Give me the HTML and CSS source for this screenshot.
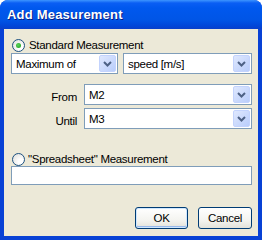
FILE: index.html
```html
<!DOCTYPE html>
<html lang="en">
<head>
    <meta charset="UTF-8">
    <title>Add Measurement</title>
    <link rel="stylesheet" href="styles.css">
</head>
<body>
    <div class="window">
        <div class="titlebar">Add Measurement</div>
        <div class="client">
            <label class="radio-row first">
                <span class="radio checked"></span>
                <span>Standard Measurement</span>
            </label>
            <div class="combo-row">
                <div class="combo small">
                    <span class="value">Maximum of</span>
                    <span class="drop"><svg width="9" height="6" viewBox="0 0 9 6"><polyline points="1,1 4.5,4.5 8,1" fill="none" stroke="#4d6185" stroke-width="2"/></svg></span>
                </div>
                <div class="combo wide">
                    <span class="value">speed [m/s]</span>
                    <span class="drop"><svg width="9" height="6" viewBox="0 0 9 6"><polyline points="1,1 4.5,4.5 8,1" fill="none" stroke="#4d6185" stroke-width="2"/></svg></span>
                </div>
            </div>
            <div class="field-row from">
                <span class="field-label">From</span>
                <div class="combo wide">
                    <span class="value">M2</span>
                    <span class="drop"><svg width="9" height="6" viewBox="0 0 9 6"><polyline points="1,1 4.5,4.5 8,1" fill="none" stroke="#4d6185" stroke-width="2"/></svg></span>
                </div>
            </div>
            <div class="field-row until">
                <span class="field-label">Until</span>
                <div class="combo wide">
                    <span class="value">M3</span>
                    <span class="drop"><svg width="9" height="6" viewBox="0 0 9 6"><polyline points="1,1 4.5,4.5 8,1" fill="none" stroke="#4d6185" stroke-width="2"/></svg></span>
                </div>
            </div>
            <label class="radio-row second">
                <span class="radio"></span>
                <span>"Spreadsheet" Measurement</span>
            </label>
            <div class="textbox"></div>
            <div class="buttons">
                <button class="btn default">OK</button>
                <button class="btn">Cancel</button>
            </div>
        </div>
    </div>
</body>
</html>
```
FILE: styles.css
```css
body {
    margin: 0;
    background: #ffffff;
    font-family: "Liberation Sans", Arial, sans-serif;
    font-size: 11.5px;
    letter-spacing: -0.3px;
    color: #000000;
}

.window {
    width: 262px;
    height: 240px;
    display: flex;
    flex-direction: column;
    background: #0841d5;
    border-radius: 8px 8px 0 0;
    overflow: hidden;
}

.titlebar {
    height: 29px;
    box-sizing: border-box;
    padding: 7px 0 0 7px;
    color: #ffffff;
    font-weight: bold;
    font-size: 13px;
    letter-spacing: 0.2px;
    text-shadow: 1px 1px 0 #0a1e80;
    background: linear-gradient(#3d95ff 0px, #0a5ef4 3px, #0058ee 8px, #0055e6 20px, #0146d8 26px, #0a3fc9 29px);
}

.client {
    flex: 1;
    margin: 0 4px 4px 4px;
    background: #ece9d8;
    padding: 0 6px 0 7px;
    display: flex;
    flex-direction: column;
}

.radio-row {
    display: flex;
    align-items: center;
    gap: 4px;
    height: 14px;
    padding-left: 1px;
}

.radio-row.first {
    margin-top: 9px;
}

.radio-row.second {
    margin-top: 23px;
    gap: 3px;
}

.radio {
    width: 11px;
    height: 11px;
    border: 1px solid #1c5180;
    border-radius: 50%;
    background: radial-gradient(circle at 70% 70%, #ffffff 20%, #dcdcd7 100%);
    display: flex;
    align-items: center;
    justify-content: center;
}

.radio.checked::after {
    content: "";
    width: 5px;
    height: 5px;
    border-radius: 50%;
    background: radial-gradient(circle at 40% 40%, #5bd45b, #1a9c1a);
}

.combo-row {
    display: flex;
    justify-content: space-between;
    margin-top: 1px;
}

.combo {
    height: 21px;
    box-sizing: border-box;
    border: 1px solid #7f9db9;
    background: #ffffff;
    display: flex;
    align-items: center;
    justify-content: space-between;
    padding: 1px;
}

.combo.small {
    width: 107px;
}

.combo.wide {
    flex: 1;
}

.combo-row .combo.wide {
    flex: 0 0 129px;
}

.value {
    padding-left: 3px;
}

.drop {
    width: 17px;
    height: 17px;
    box-sizing: border-box;
    border: 1px solid #c3d3fd;
    border-radius: 2px;
    background: linear-gradient(135deg, #dfe8fe, #b9cdfb);
    display: flex;
    align-items: center;
    justify-content: center;
}

.field-row {
    display: flex;
    align-items: center;
}

.field-row.from {
    margin-top: 10px;
}

.field-row.until {
    margin-top: 3px;
}

.field-label {
    width: 66px;
    text-align: right;
    padding-right: 7px;
    padding-top: 4px;
}

.textbox {
    height: 19px;
    box-sizing: border-box;
    border: 1px solid #7f9db9;
    background: #ffffff;
}

.buttons {
    display: flex;
    justify-content: flex-end;
    gap: 10px;
    margin-top: 22px;
}

.btn {
    height: 22px;
    width: 54px;
    font-family: "Liberation Sans", Arial, sans-serif;
    font-size: 11.5px;
    letter-spacing: -0.3px;
    border: 1px solid #003c74;
    border-radius: 3px;
    background: linear-gradient(#ffffff, #f4f4f0 60%, #e3e2da);
    padding: 0;
    color: #000000;
}

.btn.default {
    width: 53px;
    box-shadow: inset 0 0 0 1px #cee7ff, inset 0 -1px 0 1px #98b8ea;
}
```
